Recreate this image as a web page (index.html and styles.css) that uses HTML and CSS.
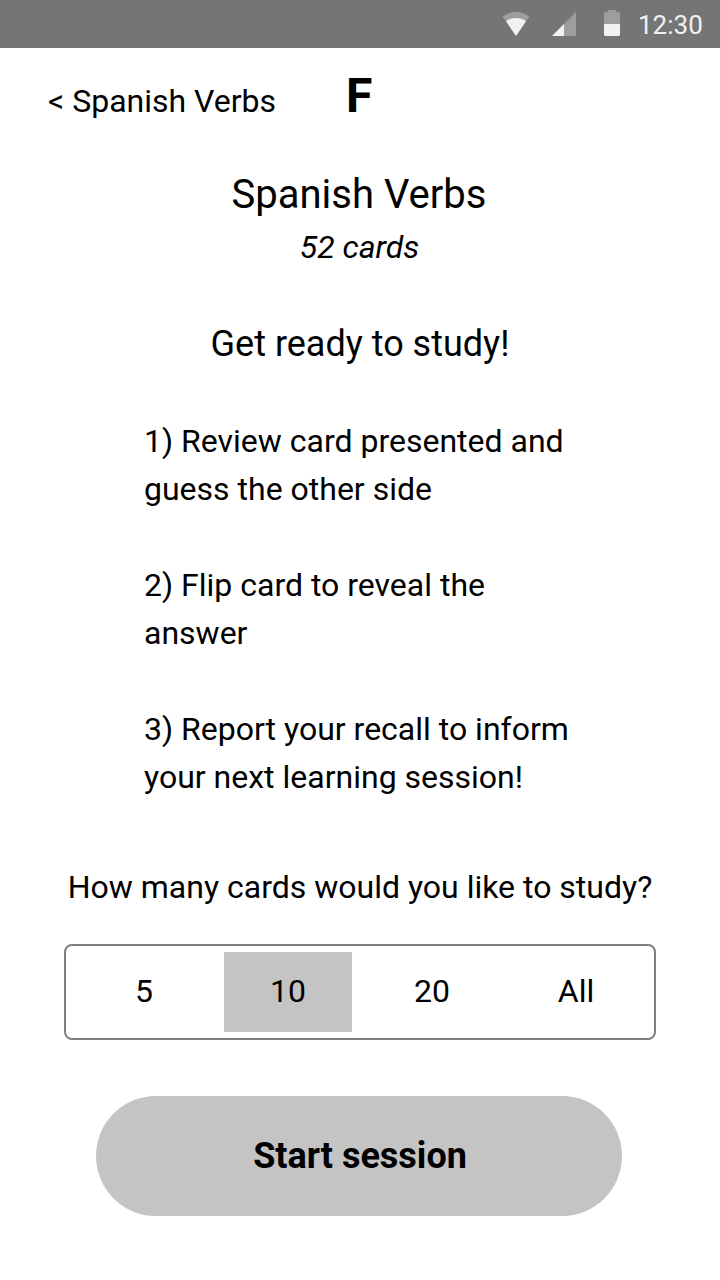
FILE: index.html
```html
<!DOCTYPE html>
<html lang="en">
<head>
<meta charset="utf-8">
<title>Spanish Verbs</title>
<link rel="stylesheet" href="styles.css">
</head>
<body>
<header class="status">
<svg class="icon-wifi" width="28" height="24" viewBox="0 0 28 24"><path d="M14 0C8.500 0 4 2 .7 4.600L14 24L27.300 4.600C24 2 19.500 0 14 0Z" fill="#9e9e9e"/><path d="M14 6C10 6 6.500 7 4 9.200L14 24L24 9.200C21.500 7 18 6 14 6Z" fill="#f1f1f1"/></svg>
<svg class="icon-signal" width="24" height="24" viewBox="0 0 24 24"><path d="M0 24L24 0V24Z" fill="#9e9e9e"/><path d="M0 24L12 12V24Z" fill="#f1f1f1"/></svg>
<svg class="icon-battery" width="16" height="26" viewBox="0 0 16 26"><path d="M0 14V3.500Q0 2 1.500 2H4V0H12V2H14.500Q16 2 16 3.500V14Z" fill="#9e9e9e"/><path d="M0 14H16V24.500Q16 26 14.500 26H1.500Q0 26 0 24.500Z" fill="#f1f1f1"/></svg>
<time class="clock">12:30</time>
</header>
<nav class="nav"><a class="back">&lt; Spanish Verbs</a><span class="logo">F</span></nav>
<main class="content">
<h1 class="title">Spanish Verbs</h1>
<p class="count">52 cards</p>
<h2 class="ready">Get ready to study!</h2>
<div class="steps">
<p class="step">1) Review card presented and<br>guess the other side</p>
<p class="step">2) Flip card to reveal the<br>answer</p>
<p class="step">3) Report your recall to inform<br>your next learning session!</p>
</div>
<p class="question">How many cards would you like to study?</p>
<div class="options">
<span class="option">5</span><span class="option selected">10</span><span class="option">20</span><span class="option">All</span>
</div>
<button class="start">Start session</button>
</main>
</body>
</html>
```
FILE: styles.css
```css
* { box-sizing: border-box; margin: 0; padding: 0; }
body { width: 720px; height: 1280px; background: #fff; color: #000; font: 32px/48px Roboto, sans-serif; overflow: hidden; }
.status { height: 48px; background: #757575; display: flex; align-items: flex-start; padding-left: 502px; }
.icon-wifi { margin-top: 12px; }
.icon-signal { margin: 12px 0 0 22px; }
.icon-battery { margin: 10px 0 0 28px; }
.clock { margin-left: 18px; font-size: 26px; line-height: 50px; color: #f1f1f1; }
.nav { display: flex; height: 100px; padding-left: 48px; }
.back { width: 298px; padding-top: 29px; white-space: nowrap; }
.logo { padding-top: 24px; font-size: 48px; font-weight: 700; }
.content { display: flex; flex-direction: column; align-items: center; white-space: nowrap; }
.title { margin: 23px 2px 0 0; font-size: 40px; font-weight: 400; }
.count { margin: 4px 1px 0 0; font-style: italic; }
.ready { margin-top: 49px; font-size: 36px; font-weight: 400; }
.steps { width: 432px; margin-top: 49px; display: flex; flex-direction: column; gap: 48px; }
.question { margin-top: 62px; }
.options { width: 592px; height: 96px; margin-top: 33px; padding: 6px 14px; border: 2px solid #808080; border-radius: 8px; display: flex; gap: 16px; }
.option { width: 128px; height: 80px; line-height: 78px; text-align: center; }
.selected { background: #c4c4c4; }
.start { width: 526px; height: 120px; margin: 56px 2px 0 0; padding-left: 2px; border: 0; border-radius: 60px; background: #c4c4c4; color: #000; font: 700 36px/120px Roboto, sans-serif; }
```
